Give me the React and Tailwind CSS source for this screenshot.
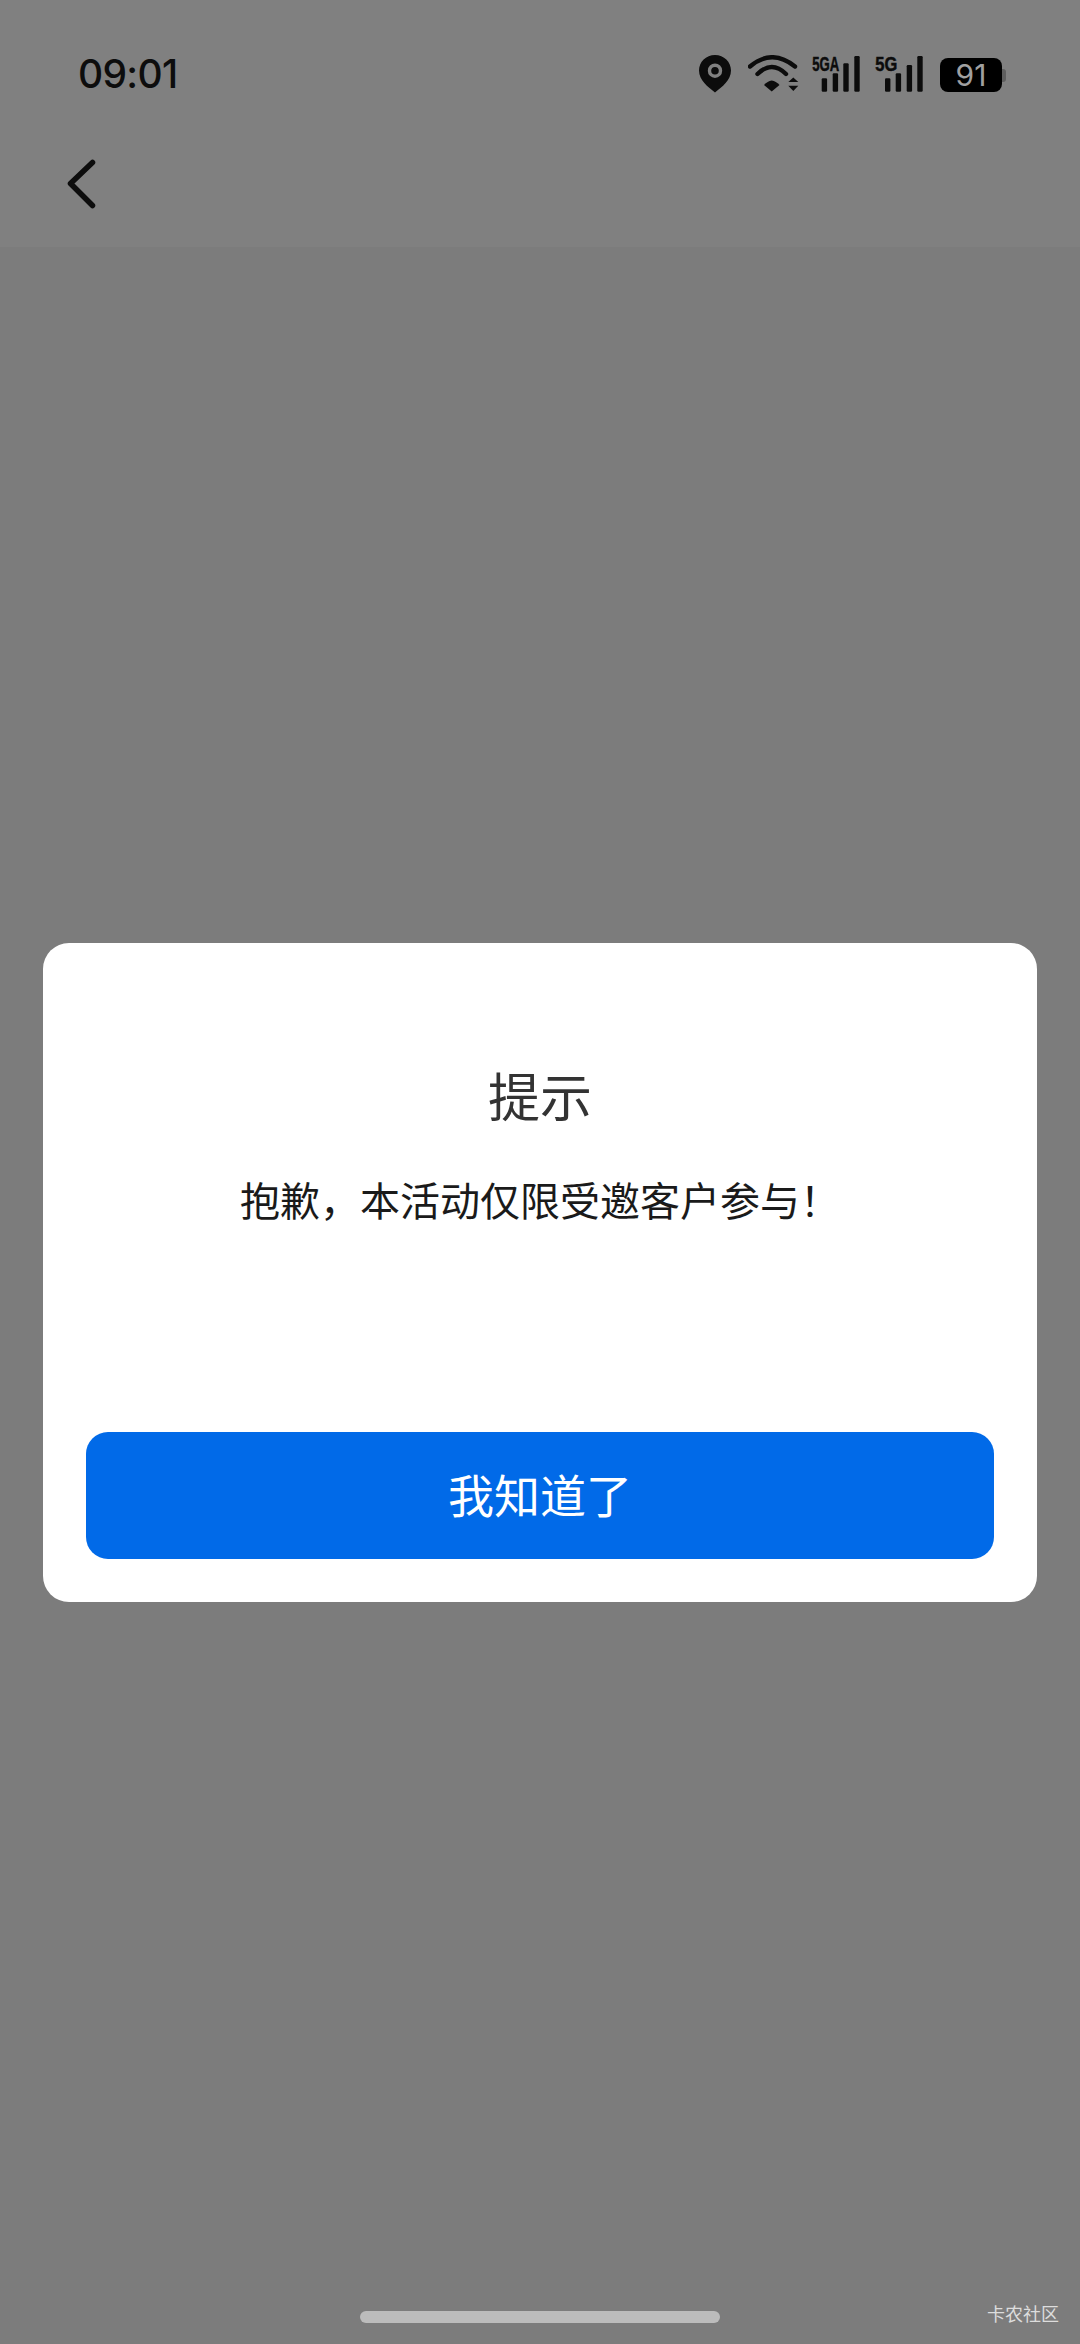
const cjk = "font-['Noto_Sans_CJK_SC','Noto_Sans',sans-serif]";

function Pin() {
  return (
    <svg width="32" height="38" viewBox="0 0 32 38" className="block">
      <path d="M16 0C7 0 0 7 0 15.5C0 25 9 32 16 37.5C23 32 32 25 32 15.5C32 7 25 0 16 0Z" fill="#0c0c0c" />
      <circle cx="16" cy="15.7" r="5.5" fill="none" stroke="#808080" strokeWidth="3.4" />
    </svg>
  );
}

function Wifi() {
  return (
    <svg width="51" height="38" viewBox="0 0 51 38" className="block">
      <path d="M2 11.5Q24 -7 47 11.5" fill="none" stroke="#0c0c0c" strokeWidth="4.4" strokeLinecap="round" />
      <path d="M9.5 19Q24 5 38 19" fill="none" stroke="#0c0c0c" strokeWidth="4.4" strokeLinecap="round" />
      <path d="M23.7 25.5Q28 26 31.5 30L23.7 36.5L16 30Q19.5 26 23.7 25.5Z" fill="#0c0c0c" />
      <path d="M40.3 27H50.3L45.3 22.5Z" fill="#0c0c0c" />
      <path d="M40.3 30.7H50.3L45.3 36Z" fill="#0c0c0c" />
    </svg>
  );
}

function Signal({ label, textWidth, bars, width }) {
  return (
    <svg width={width} height="44" viewBox={`0 -6 ${width} 44`} className="mt-[-6px] block">
      <text x="0.3" y="15.6" fontFamily="'Liberation Sans',sans-serif" fontWeight="700" fontSize="20" textLength={textWidth} lengthAdjust="spacingAndGlyphs" fill="#0c0c0c" stroke="#0c0c0c" strokeWidth="0.5">{label}</text>
      {bars.map(([x, y]) => (
        <rect key={x} x={x} y={y} width="5.4" height={36.7 - y} rx="1.2" fill="#0c0c0c" />
      ))}
    </svg>
  );
}

export default function App() {
  return (
    <div className="relative flex h-[2344px] w-[1080px] flex-col overflow-hidden bg-[#7c7c7c]">
      <header className="h-[247px] bg-[#808080] pt-[55px]">
        <div className="flex items-start justify-between pl-[78px] pr-[74px]">
          <span className="mt-[-3px] font-['Inter',sans-serif] text-[39px] font-medium leading-[44px] tracking-[-0.7px] text-[#0d0d0d]">09:01</span>
          <div className="flex items-start">
            <Pin />
            <div className="ml-[17px]"><Wifi /></div>
            <div className="ml-[13px]"><Signal label="5GA" textWidth={27} width={48} bars={[[9.7, 23.3], [20.7, 18.3], [31.3, 8.3], [42.3, 1]]} /></div>
            <div className="ml-[15px]"><Signal label="5G" textWidth={22} width={48} bars={[[10, 23.3], [20.7, 18.3], [31.7, 10], [42.3, 1]]} /></div>
            <div className="ml-[17px] mt-[3px] flex items-center">
              <div className="flex h-[34px] w-[62px] items-center justify-center rounded-[8px] bg-black font-['Inter',sans-serif] text-[30px] leading-none text-[#a0a0a0]">91</div>
              <div className="h-[13px] w-[4px] rounded-r-[3px] bg-[#5e5e5e]"></div>
            </div>
          </div>
        </div>
        <svg width="34" height="56" viewBox="0 0 34 56" className="ml-[65px] mt-[60px] block">
          <path d="M27.5 6.5L5.5 27.5L27.5 49.5" fill="none" stroke="#0d0d0d" strokeWidth="5.5" strokeLinecap="round" strokeLinejoin="round" />
        </svg>
      </header>

      <main className="flex-1 px-[43px] pt-[696px]">
        <section className={`flex h-[659px] flex-col items-center rounded-[26px] bg-white ${cjk}`}>
          <h1 className="mt-[116px] text-[52px] font-normal leading-[72px] text-[#333333]">提示</h1>
          <p className="mt-[40px] text-[40px] leading-[56px] text-[#1a1a1a]">抱歉，本活动仅限受邀客户参与！</p>
          <button className="mt-[205px] flex h-[127px] w-[908px] items-center justify-center rounded-[22px] bg-[#016ae8] pb-[6px] text-[46px] leading-none text-white">我知道了</button>
        </section>
      </main>

      <div className="mb-[21px] flex justify-center">
        <div className="h-[12px] w-[360px] rounded-full bg-[#bcbcbc]"></div>
      </div>

      <span className={`absolute bottom-[20px] right-[21px] text-[18px] leading-[22px] text-[#dddddd] ${cjk}`}>卡农社区</span>
    </div>
  );
}
